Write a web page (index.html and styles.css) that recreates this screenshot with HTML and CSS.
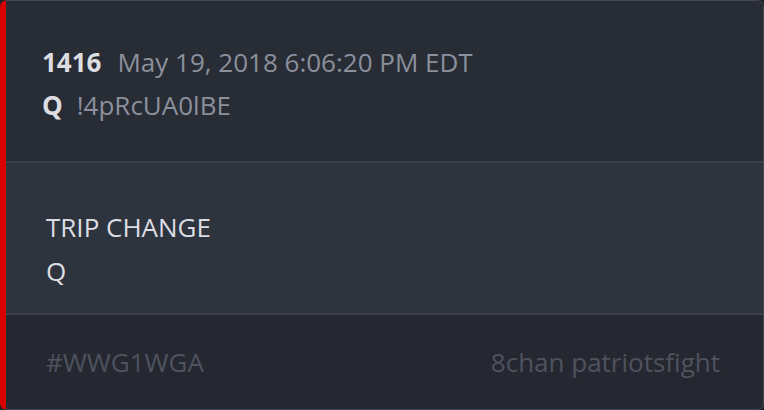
FILE: index.html
```html
<!DOCTYPE html>
<html>
<head>
<meta charset="utf-8">
<link rel="stylesheet" href="styles.css">
</head>
<body>
<div class="card">
  <div class="head">
    <div class="row1"><span class="num">1416</span><span class="date">May 19, 2018 6:06:20 PM EDT</span></div>
    <div class="row2"><span class="name">Q</span><span class="trip">!4pRcUA0lBE</span></div>
  </div>
  <div class="body">
    <p>TRIP CHANGE</p>
    <p>Q</p>
  </div>
  <div class="foot">
    <span>#WWG1WGA</span>
    <span>8chan patriotsfight</span>
  </div>
</div>
</body>
</html>
```
FILE: styles.css
```css
html, body { margin: 0; padding: 0; background: #1e2128; }
body { font-family: "Open Sans", sans-serif; }
.card {
  width: 764px; height: 410px; box-sizing: border-box;
  border: 1px solid #434852; border-left: 6px solid #d90000;
  border-radius: 7px; overflow: hidden;
  display: flex; flex-direction: column;
}
.head {
  background: #282c35; height: 162px; box-sizing: border-box; flex: none;
  padding: 45px 36px 0; border-bottom: 2px solid #3b404a;
}
.row1, .row2 { font-size: 26px; line-height: 32px; display: flex; gap: 16px; align-items: baseline; }
.row2 { margin-top: 11px; gap: 14px; }
.num { color: #dcdde0; font-weight: 700; }
.name { color: #dcdde0; font-weight: 700; }
.date, .trip { color: #8b909c; }
.body {
  background: #2e343e; height: 152px; box-sizing: border-box; flex: none;
  padding: 42px 40px 0; border-bottom: 2px solid #3b404a;
}
.body p { margin: 0; color: #dcdde2; font-size: 26px; line-height: 44px; }
.foot {
  flex: 1; background: #252830; display: flex; justify-content: space-between;
  padding: 0 43px 0 40px; align-items: center; font-size: 26px; color: #4e535e;
}
```
